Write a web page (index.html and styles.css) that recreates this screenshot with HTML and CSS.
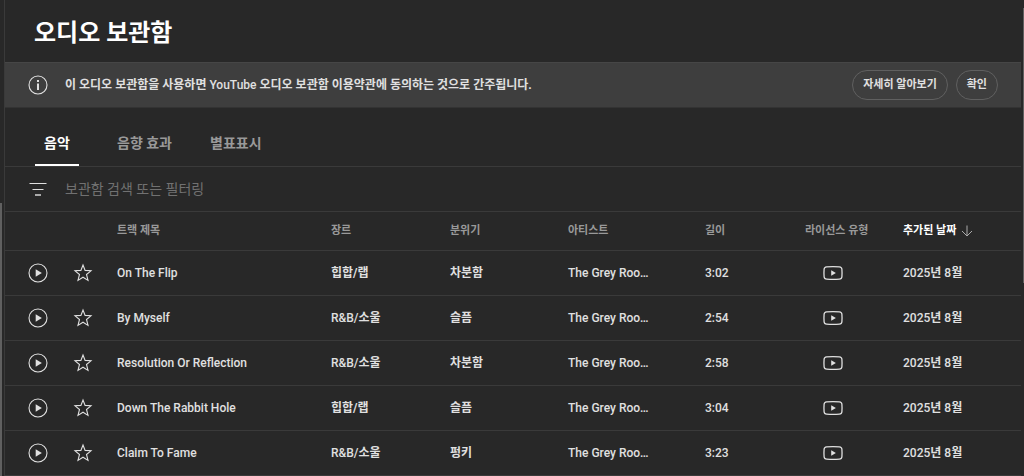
FILE: index.html
```html
<!DOCTYPE html>
<html lang="ko">
<head>
  <meta charset="UTF-8">
  <title>오디오 보관함</title>
  <link rel="stylesheet" href="styles.css">
</head>
<body>

<svg class="sprite" aria-hidden="true">
  <symbol id="play" viewBox="0 0 20 20">
    <circle cx="10" cy="10" r="9" fill="none" stroke="currentColor" stroke-width="1.100"/>
    <path d="M7.700 6.300v7.400l6.200-3.700z" fill="currentColor"/>
  </symbol>
  <symbol id="star" viewBox="0 0 20 20">
    <path d="M10 2L12.100 7.400L18 7.800L13.500 11.500L15 17.400L10 14.200L5 17.400L6.500 11.500L2 7.800L7.900 7.400z" fill="none" stroke="currentColor" stroke-width="1.100"/>
  </symbol>
  <symbol id="youtube" viewBox="0 0 20 20">
    <path d="M3.600 3.800Q10 3.300 16.400 3.800Q18.700 4 18.900 6.300Q19.200 10 18.900 13.700Q18.700 16 16.400 16.200Q10 16.700 3.600 16.200Q1.300 16 1.100 13.700Q.8 10 1.100 6.300Q1.300 4 3.600 3.800z" fill="none" stroke="currentColor" stroke-width="1.300"/>
    <path d="M8.200 7.200v5.600l4.700-2.800z" fill="currentColor"/>
  </symbol>
</svg>

<div class="app">
  <div class="nav-edge"></div>

  <main class="content">
    <h1 class="title">오디오 보관함</h1>

    <section class="banner">
      <svg class="icon" viewBox="0 0 20 20">
        <circle cx="10" cy="10" r="9" fill="none" stroke="currentColor" stroke-width="1.100"/>
        <path d="M9 5h2v2H9zM9 8.500h2V15H9z" fill="currentColor"/>
      </svg>
      <p class="banner-text ko">이 오디오 보관함을 사용하면 <span class="en">YouTube</span> 오디오 보관함 이용약관에 동의하는 것으로 간주됩니다.</p>
      <button class="pill" type="button">자세히 알아보기</button>
      <button class="pill" type="button">확인</button>
    </section>

    <nav class="tabs">
      <button class="tab active" type="button"><span>음악</span></button>
      <button class="tab" type="button"><span>음향 효과</span></button>
      <button class="tab" type="button"><span>별표표시</span></button>
    </nav>

    <div class="filter">
      <svg class="icon" viewBox="0 0 20 20">
        <path d="M1.500 4.500h17M4.500 10.500h11" fill="none" stroke="currentColor"/>
        <path d="M7 16h6" fill="none" stroke="#aaa" stroke-width="2"/>
      </svg>
      <input class="search" type="text" placeholder="보관함 검색 또는 필터링" aria-label="보관함 검색 또는 필터링">
    </div>

    <table class="tracks">
      <thead>
        <tr>
          <th class="col-play"></th>
          <th class="col-star"></th>
          <th class="col-name">트랙 제목</th>
          <th class="col-genre">장르</th>
          <th class="col-mood">분위기</th>
          <th class="col-artist">아티스트</th>
          <th class="col-time">길이</th>
          <th class="col-license">라이선스 유형</th>
          <th class="col-date sorted">
            <button class="sort" type="button">추가된 날짜
              <svg class="arrow" viewBox="0 0 12 12"><path d="M6 .5v10.500M1 6l5 5 5-5" fill="none" stroke="currentColor"/></svg>
            </button>
          </th>
        </tr>
      </thead>
      <tbody>
        <tr>
          <td class="col-play"><button class="icon-btn" type="button" aria-label="재생"><svg class="icon"><use href="#play"/></svg></button></td>
          <td><button class="icon-btn" type="button" aria-label="별표"><svg class="icon"><use href="#star"/></svg></button></td>
          <td>On The Flip</td>
          <td class="ko">힙합/랩</td>
          <td class="ko">차분함</td>
          <td>The Grey Roo…</td>
          <td>3:02</td>
          <td class="license"><svg class="icon"><use href="#youtube"/></svg></td>
          <td class="ko"><span class="en">2025</span>년 <span class="en">8</span>월</td>
        </tr>
        <tr>
          <td class="col-play"><button class="icon-btn" type="button" aria-label="재생"><svg class="icon"><use href="#play"/></svg></button></td>
          <td><button class="icon-btn" type="button" aria-label="별표"><svg class="icon"><use href="#star"/></svg></button></td>
          <td>By Myself</td>
          <td class="ko"><span class="en">R&amp;B/</span>소울</td>
          <td class="ko">슬픔</td>
          <td>The Grey Roo…</td>
          <td>2:54</td>
          <td class="license"><svg class="icon"><use href="#youtube"/></svg></td>
          <td class="ko"><span class="en">2025</span>년 <span class="en">8</span>월</td>
        </tr>
        <tr>
          <td class="col-play"><button class="icon-btn" type="button" aria-label="재생"><svg class="icon"><use href="#play"/></svg></button></td>
          <td><button class="icon-btn" type="button" aria-label="별표"><svg class="icon"><use href="#star"/></svg></button></td>
          <td>Resolution Or Reflection</td>
          <td class="ko"><span class="en">R&amp;B/</span>소울</td>
          <td class="ko">차분함</td>
          <td>The Grey Roo…</td>
          <td>2:58</td>
          <td class="license"><svg class="icon"><use href="#youtube"/></svg></td>
          <td class="ko"><span class="en">2025</span>년 <span class="en">8</span>월</td>
        </tr>
        <tr>
          <td class="col-play"><button class="icon-btn" type="button" aria-label="재생"><svg class="icon"><use href="#play"/></svg></button></td>
          <td><button class="icon-btn" type="button" aria-label="별표"><svg class="icon"><use href="#star"/></svg></button></td>
          <td>Down The Rabbit Hole</td>
          <td class="ko">힙합/랩</td>
          <td class="ko">슬픔</td>
          <td>The Grey Roo…</td>
          <td>3:04</td>
          <td class="license"><svg class="icon"><use href="#youtube"/></svg></td>
          <td class="ko"><span class="en">2025</span>년 <span class="en">8</span>월</td>
        </tr>
        <tr>
          <td class="col-play"><button class="icon-btn" type="button" aria-label="재생"><svg class="icon"><use href="#play"/></svg></button></td>
          <td><button class="icon-btn" type="button" aria-label="별표"><svg class="icon"><use href="#star"/></svg></button></td>
          <td>Claim To Fame</td>
          <td class="ko"><span class="en">R&amp;B/</span>소울</td>
          <td class="ko">펑키</td>
          <td>The Grey Roo…</td>
          <td>3:23</td>
          <td class="license"><svg class="icon"><use href="#youtube"/></svg></td>
          <td class="ko"><span class="en">2025</span>년 <span class="en">8</span>월</td>
        </tr>
      </tbody>
    </table>
  </main>

  <div class="page-edge"></div>
</div>

</body>
</html>
```

FILE: styles.css
```css
* { box-sizing: border-box; }
body { margin: 0; background: #282828; color: #e0e0e0; font-family: Roboto, "Noto Sans CJK KR", sans-serif; font-size: 12px; line-height: 16px; font-weight: 500; }
button, input { font: inherit; color: inherit; background: none; border: 0; padding: 0; margin: 0; }
button { cursor: pointer; }
.sprite { display: none; }
.icon { display: block; width: 20px; height: 20px; flex: none; }

/* hangul is set bold, latin inside it stays medium */
.ko { font-weight: 700; }
.en { font-weight: 500; }

.app { display: flex; min-height: 100vh; }
.content { flex: 1; min-width: 0; border-left: 1px solid #3a3a3a; }

/* scrollbars of the side menu and of the page */
.nav-edge { width: 4px; padding-top: 203px; display: flex; }
.nav-edge::before { content: ""; width: 2px; background: #606060; }
.page-edge { width: 3px; padding-top: 8px; }
.page-edge::before { content: ""; display: block; width: 1px; height: 275px; margin-left: 2px; background: #606060; }

.title { margin: 0; padding: 17px 29px 13px; font-size: 24px; line-height: 32px; font-weight: 700; color: #fff; }

.banner { display: flex; align-items: center; gap: 8px; height: 46px; padding: 0 23px; background: #3e3e3e; border-top: 1px solid #464646; border-bottom: 1px solid #333; }
.banner-text { flex: 1; margin: 0 0 0 9px; }
.pill { height: 30px; padding: 0 10px; border: 1px solid #606060; border-radius: 15px; font-size: 11px; font-weight: 700; }

.tabs { display: flex; padding: 0 11px; border-bottom: 1px solid #3a3a3a; font-size: 14px; color: #999; }
.tab { display: flex; justify-content: center; min-width: 82px; height: 58px; padding: 0 10px; font-weight: 700; }
.tab span { height: 58px; padding: 27px 9px 0; border-bottom: 2px solid transparent; }
.tab.active { color: #fff; }
.tab.active span { border-color: #fff; }

.filter { display: flex; align-items: center; gap: 17px; height: 45px; padding: 0 23px; border-bottom: 1px solid #3a3a3a; }
.search { flex: 1; font-size: 14px; font-weight: 400; outline: 0; }
.search::placeholder { color: #717171; opacity: 1; }

.tracks { width: 100%; table-layout: fixed; border-collapse: collapse; }
.tracks th, .tracks td { padding: 0; text-align: left; border-bottom: 1px solid #3a3a3a; white-space: nowrap; }
.tracks th { height: 38px; padding-top: 1px; font-size: 11px; font-weight: 700; color: #999; }
.tracks td { height: 45px; }
.tracks .col-play { width: 68px; padding-left: 23px; }
.col-star { width: 44px; }
.col-genre { width: 119px; }
.col-mood { width: 118px; }
.col-artist { width: 137px; }
.col-time { width: 100px; }
.col-license { width: 98px; }
.col-date { width: 118px; }
.tracks .license { padding-left: 18px; }
.tracks .sorted { color: #fff; }
.sort { display: flex; align-items: center; gap: 5px; }
.arrow { width: 12px; height: 12px; color: #aaa; }
.icon-btn { display: block; }
```
